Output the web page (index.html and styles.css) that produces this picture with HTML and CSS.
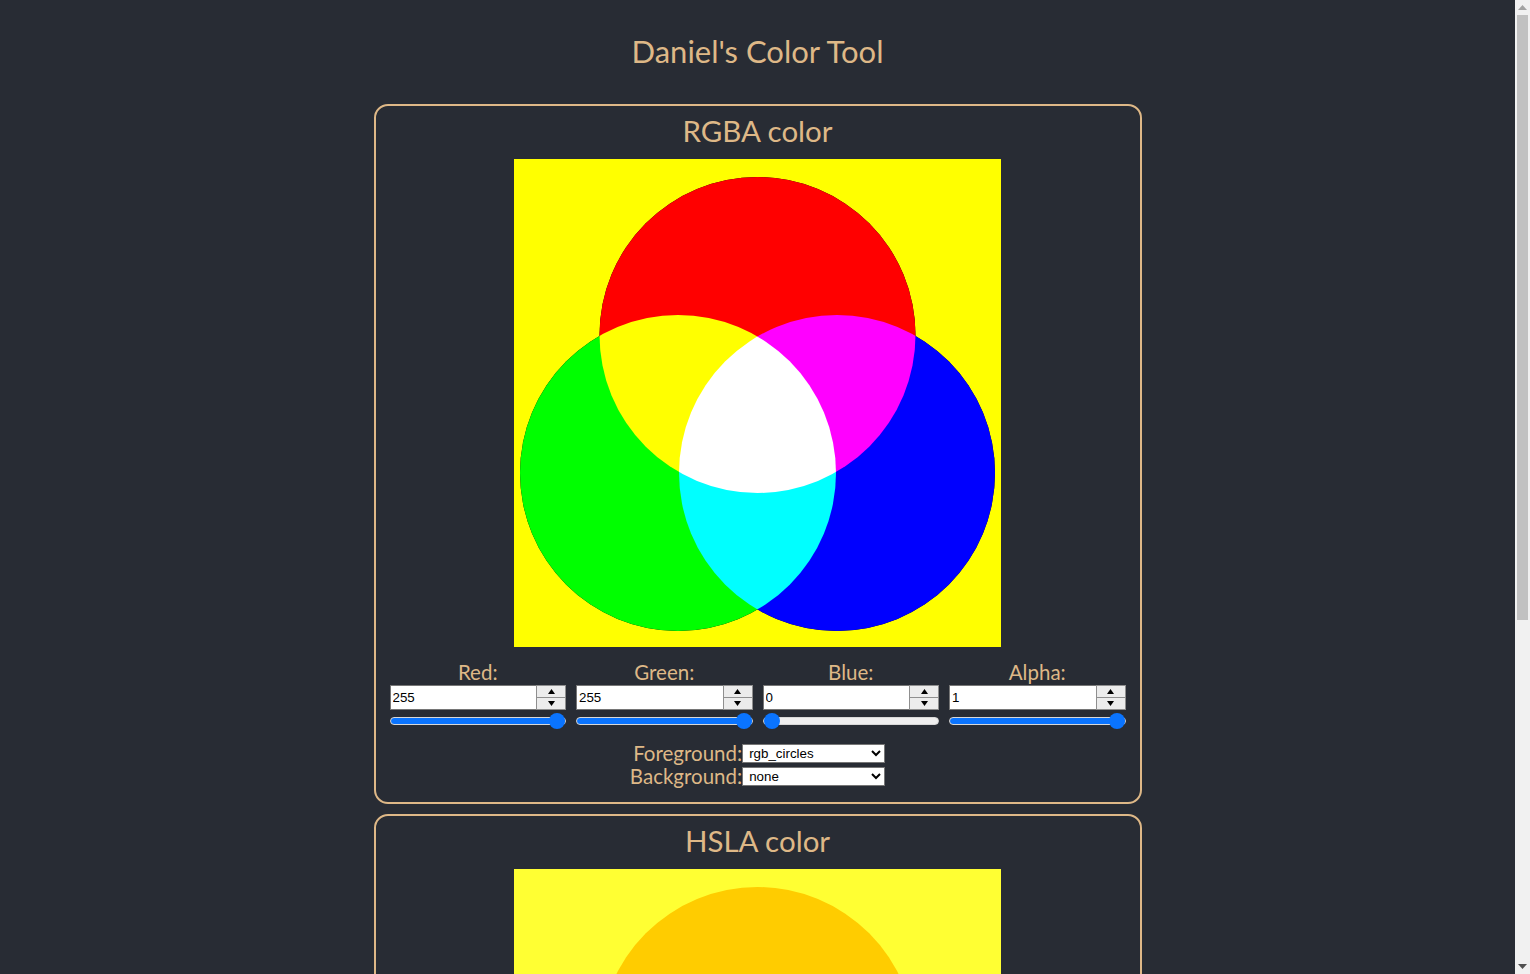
FILE: index.html
```html
<!DOCTYPE html>
<html lang="en">
<head>
<meta charset="utf-8">
<title>Daniel's Color Tool</title>
<link rel="stylesheet" href="styles.css">
</head>
<body>
<div class="app">
  <h1 class="title">Daniel's Color Tool</h1>

  <section class="card">
    <h2 class="card-title">RGBA color</h2>
    <svg class="canvas" width="487" height="488" viewBox="0 0 487 488">
      <rect width="487" height="488" fill="#ffff00"/>
      <g class="iso">
        <circle cx="243.5" cy="176" r="158" fill="#000"/>
        <circle cx="164" cy="314" r="158" fill="#000"/>
        <circle cx="323" cy="314" r="158" fill="#000"/>
        <circle class="scr" cx="243.5" cy="176" r="158" fill="#ff0000"/>
        <circle class="scr" cx="164" cy="314" r="158" fill="#00ff00"/>
        <circle class="scr" cx="323" cy="314" r="158" fill="#0000ff"/>
      </g>
    </svg>
    <div class="controls">
      <div class="ctl">
        <label class="ctl-label">Red:</label>
        <div class="num"><input class="num-input" type="text" value="255"><div class="spin"><span class="spin-btn"><svg width="7" height="5" viewBox="0 0 7 5"><path d="M3.5 0L7 5H0z"/></svg></span><span class="spin-btn"><svg width="7" height="5" viewBox="0 0 7 5"><path d="M0 0H7L3.5 5z"/></svg></span></div></div>
        <input class="range" type="range" min="0" max="255" value="255" style="--p:100%">
      </div>
      <div class="ctl">
        <label class="ctl-label">Green:</label>
        <div class="num"><input class="num-input" type="text" value="255"><div class="spin"><span class="spin-btn"><svg width="7" height="5" viewBox="0 0 7 5"><path d="M3.5 0L7 5H0z"/></svg></span><span class="spin-btn"><svg width="7" height="5" viewBox="0 0 7 5"><path d="M0 0H7L3.5 5z"/></svg></span></div></div>
        <input class="range" type="range" min="0" max="255" value="255" style="--p:100%">
      </div>
      <div class="ctl">
        <label class="ctl-label">Blue:</label>
        <div class="num"><input class="num-input" type="text" value="0"><div class="spin"><span class="spin-btn"><svg width="7" height="5" viewBox="0 0 7 5"><path d="M3.5 0L7 5H0z"/></svg></span><span class="spin-btn"><svg width="7" height="5" viewBox="0 0 7 5"><path d="M0 0H7L3.5 5z"/></svg></span></div></div>
        <input class="range" type="range" min="0" max="255" value="0" style="--p:0%">
      </div>
      <div class="ctl">
        <label class="ctl-label">Alpha:</label>
        <div class="num"><input class="num-input" type="text" value="1"><div class="spin"><span class="spin-btn"><svg width="7" height="5" viewBox="0 0 7 5"><path d="M3.5 0L7 5H0z"/></svg></span><span class="spin-btn"><svg width="7" height="5" viewBox="0 0 7 5"><path d="M0 0H7L3.5 5z"/></svg></span></div></div>
        <input class="range" type="range" min="0" max="1" step="0.01" value="1" style="--p:100%">
      </div>
    </div>
    <div class="pickers">
      <label class="pick-label">Foreground:</label>
      <select class="pick"><option>rgb_circles</option><option>none</option></select>
      <label class="pick-label">Background:</label>
      <select class="pick"><option>none</option><option>rgb_circles</option></select>
    </div>
  </section>

  <section class="card">
    <h2 class="card-title">HSLA color</h2>
    <svg class="canvas" width="487" height="488" viewBox="0 0 487 488">
      <rect width="487" height="488" fill="#ffff33"/>
      <circle cx="164" cy="314" r="158" fill="#ccff00"/>
      <circle cx="323" cy="314" r="158" fill="#ff9900"/>
      <circle cx="243.5" cy="176" r="158" fill="#ffcc00"/>
    </svg>
  </section>
</div>

<div class="scrollbar" aria-hidden="true">
  <div class="sb-arrow sb-up"><svg width="9" height="5" viewBox="0 0 9 5"><path d="M4.5 0L9 5H0z"/></svg></div>
  <div class="sb-track"><div class="sb-thumb"></div></div>
  <div class="sb-arrow sb-down"><svg width="9" height="5" viewBox="0 0 9 5"><path d="M0 0H9L4.5 5z"/></svg></div>
</div>
</body>
</html>
```

FILE: styles.css
```css
html, body {
  margin: 0;
  padding: 0;
}
body {
  background: #282c34;
  color: #deb887;
  font-family: Lato, "Open Sans", sans-serif;
}
.app {
  display: flex;
  flex-direction: column;
  align-items: center;
  padding: 0 15px 40px 0;
}
.title {
  font-size: 31px;
  font-weight: 400;
  line-height: 42px;
  margin: 30px 0 32px;
}
.card {
  box-sizing: border-box;
  width: 768px;
  border: 2px solid #deb887;
  border-radius: 14px;
  padding: 0 0 16px;
  margin-bottom: 10px;
  display: flex;
  flex-direction: column;
  align-items: center;
}
.card-title {
  font-size: 29.5px;
  font-weight: 400;
  line-height: 34px;
  margin: 8px 0 11px;
}
.canvas {
  display: block;
}
.iso {
  isolation: isolate;
}
.scr {
  mix-blend-mode: screen;
}
.controls {
  align-self: stretch;
  display: grid;
  grid-template-columns: repeat(4, 1fr);
  gap: 10px;
  padding: 0 14px;
  margin-top: 13px;
}
.ctl {
  display: flex;
  flex-direction: column;
  min-width: 0;
}
.ctl-label {
  text-align: center;
  font-size: 20.5px;
  line-height: 24px;
  margin-bottom: 1px;
}
.num {
  display: flex;
  height: 25px;
}
.num-input {
  flex: 1;
  min-width: 0;
  box-sizing: border-box;
  height: 25px;
  margin: 0;
  border: 1px solid #767676;
  border-right: 0;
  padding: 0 2px;
  font-family: "Liberation Sans", Arial, sans-serif;
  font-size: 13.33px;
  color: #000;
  background: #fff;
  outline: none;
}
.spin {
  width: 30px;
  display: flex;
  flex-direction: column;
  box-sizing: border-box;
  border: 1px solid #8f8f8f;
  background: #8f8f8f;
  gap: 1px;
}
.spin-btn {
  flex: 1;
  background: #ececec;
  display: flex;
  align-items: center;
  justify-content: center;
}
.spin-btn svg {
  display: block;
  fill: #000;
}
.range {
  -webkit-appearance: none;
  appearance: none;
  margin: 3px 0 0;
  height: 16px;
  width: 100%;
  background: transparent;
  padding: 0;
}
.range::-webkit-slider-runnable-track {
  height: 8px;
  border-radius: 4px;
  box-sizing: border-box;
  border: 1px solid #d8d8d8;
  background: linear-gradient(to right, #0a74ff var(--p), #efefef var(--p));
}
.range::-webkit-slider-thumb {
  -webkit-appearance: none;
  appearance: none;
  width: 16px;
  height: 16px;
  border-radius: 50%;
  background: #0a74ff;
  border: 0;
  margin-top: -5px;
}
.pickers {
  display: grid;
  grid-template-columns: auto 143px;
  justify-content: center;
  align-items: center;
  row-gap: 4px;
  margin-top: 15px;
}
.pick-label {
  font-size: 20.5px;
  line-height: 19px;
  text-align: right;
}
.pick {
  height: 19px;
  width: 143px;
  margin: 0;
  box-sizing: border-box;
  font-family: "Liberation Sans", Arial, sans-serif;
  font-size: 13.33px;
  border: 1px solid #767676;
  border-radius: 0;
  background: #fff;
  color: #000;
  padding: 0 2px;
}

/* classic page scrollbar, drawn over the right edge */
.scrollbar {
  position: fixed;
  top: 0;
  right: 0;
  bottom: 0;
  width: 15px;
  background: #f1f1f1;
  display: flex;
  flex-direction: column;
}
.sb-arrow {
  height: 15px;
  display: flex;
  align-items: center;
  justify-content: center;
}
.sb-arrow svg {
  display: block;
}
.sb-up svg {
  fill: #a3a3a3;
}
.sb-down svg {
  fill: #505050;
}
.sb-track {
  flex: 1;
  padding: 0 2px;
}
.sb-thumb {
  height: 605px;
  background: #c1c1c1;
}
```
